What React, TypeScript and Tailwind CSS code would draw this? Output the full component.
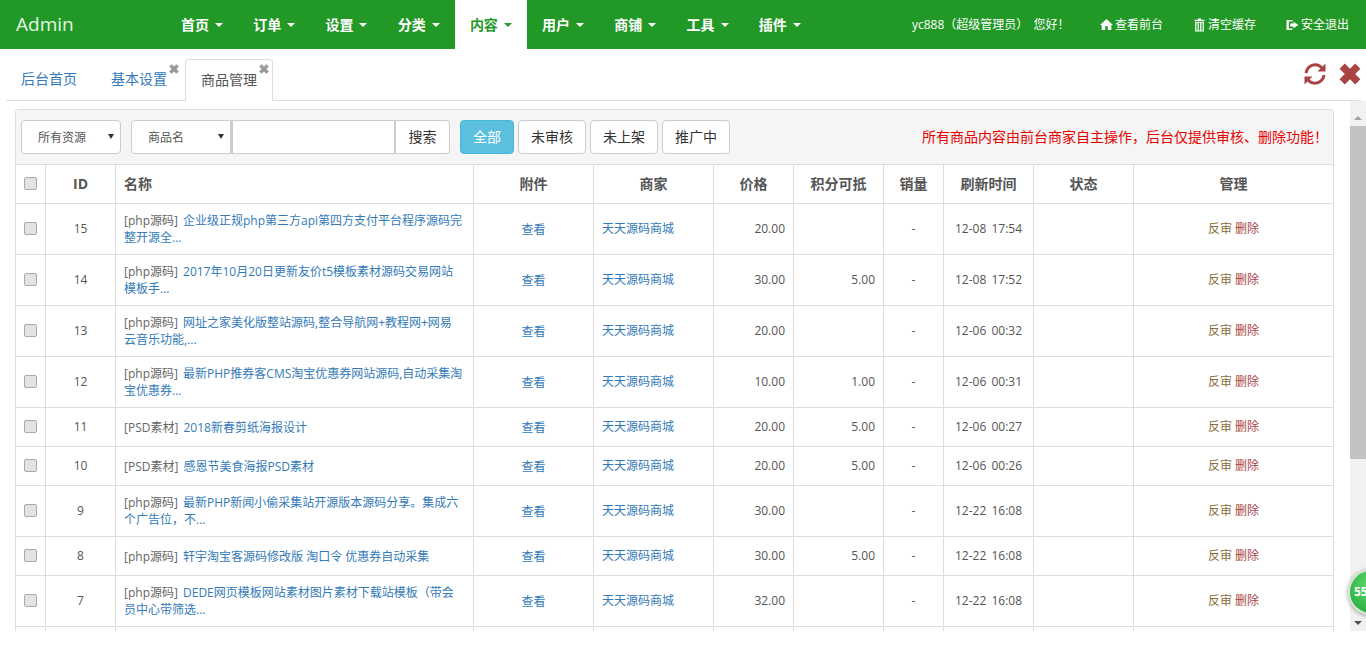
import React from "react";

const F = { fontFamily: '"Open Sans","Noto Sans CJK SC",sans-serif' };

const navItems = ["首页", "订单", "设置", "分类", "内容", "用户", "商铺", "工具", "插件"];

type Row = { id: number; tag: string; title: string; price: string; pts: string; time: string; tall: boolean };
const rows: Row[] = [
  { id: 15, tag: "[php源码]", title: "企业级正规php第三方api第四方支付平台程序源码完\n整开源全...", price: "20.00", pts: "", time: "12-08 17:54", tall: true },
  { id: 14, tag: "[php源码]", title: "2017年10月20日更新友价t5模板素材源码交易网站\n模板手...", price: "30.00", pts: "5.00", time: "12-08 17:52", tall: true },
  { id: 13, tag: "[php源码]", title: "网址之家美化版整站源码,整合导航网+教程网+网易\n云音乐功能,...", price: "20.00", pts: "", time: "12-06 00:32", tall: true },
  { id: 12, tag: "[php源码]", title: "最新PHP推券客CMS淘宝优惠券网站源码,自动采集淘\n宝优惠券...", price: "10.00", pts: "1.00", time: "12-06 00:31", tall: true },
  { id: 11, tag: "[PSD素材]", title: "2018新春剪纸海报设计", price: "20.00", pts: "5.00", time: "12-06 00:27", tall: false },
  { id: 10, tag: "[PSD素材]", title: "感恩节美食海报PSD素材", price: "20.00", pts: "5.00", time: "12-06 00:26", tall: false },
  { id: 9, tag: "[php源码]", title: "最新PHP新闻小偷采集站开源版本源码分享。集成六\n个广告位，不...", price: "30.00", pts: "", time: "12-22 16:08", tall: true },
  { id: 8, tag: "[php源码]", title: "轩宇淘宝客源码修改版 淘口令 优惠券自动采集", price: "30.00", pts: "5.00", time: "12-22 16:08", tall: false },
  { id: 7, tag: "[php源码]", title: "DEDE网页模板网站素材图片素材下载站模板（带会\n员中心带筛选...", price: "32.00", pts: "", time: "12-22 16:08", tall: true },
];

const Caret = ({ className }: { className: string }) => (
  <span className={"inline-block w-0 h-0 border-x-[4px] border-x-transparent border-t-[4px] ml-[6px] align-middle " + className} />
);

const Check = () => (
  <input type="checkbox" className="appearance-none block mx-auto w-[13px] h-[13px] rounded-[2px] border border-[#a9a9a9] bg-[#e3e3e3]" />
);

const SelectBox = ({ label, className }: { label: string; className: string }) => (
  <div className="relative">
    <select className={"appearance-none block w-[100px] h-[34px] bg-white border border-[#ccc] text-[12px] text-[#555] pl-[16px] pt-[2px] " + className}>
      <option>{label}</option>
    </select>
    <svg viewBox="0 0 6 5" className="absolute right-[7px] top-[14px] w-[6px] h-[5px] pointer-events-none">
      <path d="M0 0 H6 L3 5 Z" fill="#333" />
    </svg>
  </div>
);

const HomeIcon = () => (
  <svg viewBox="0 0 14 14" className="w-[13px] h-[13px] mr-[2px]" fill="#fff">
    <path d="M7 1 L14 7.6 L12.2 7.6 L12.2 13 L8.4 13 L8.4 9 L5.6 9 L5.6 13 L1.8 13 L1.8 7.6 L0 7.6 Z" />
  </svg>
);
const TrashIcon = () => (
  <svg viewBox="0 0 12 15" className="w-[11px] h-[14px] mr-[3px]" fill="#fff">
    <path d="M4.3 0.5 H7.7 V1.8 H11.5 V3 H0.5 V1.8 H4.3 Z" />
    <path d="M1.2 4 H10.8 V14.5 H1.2 Z M2.6 5 V13.4 H3.9 V5 Z M5.3 5 V13.4 H6.7 V5 Z M8.1 5 V13.4 H9.4 V5 Z" fillRule="evenodd" />
  </svg>
);
const LogoutIcon = () => (
  <svg viewBox="0 0 14 13" className="w-[13px] h-[12px] mr-[2px]" fill="#fff">
    <path d="M1.5 1 H7 V2.8 H3 V10.2 H7 V12 H1.5 C0.8 12 0.5 11.6 0.5 11 V2 C0.5 1.4 0.8 1 1.5 1 Z" />
    <path d="M8 3 L13.5 6.5 L8 10 V8 H4.5 V5 H8 Z" />
  </svg>
);
const RefreshIcon = () => (
  <svg viewBox="0 0 24 24" className="w-[24px] h-[24px]" fill="none" stroke="#a94442" strokeWidth="3">
    <path d="M3 11 C3.5 6 7.5 2.8 12 2.8 C15.3 2.8 18 4.4 19.6 7" />
    <path d="M21 13 C20.5 18 16.5 21.2 12 21.2 C8.7 21.2 6 19.6 4.4 17" />
    <path d="M22.5 1.5 V9.5 H14.5 Z" fill="#a94442" stroke="none" />
    <path d="M1.5 22.5 V14.5 H9.5 Z" fill="#a94442" stroke="none" />
  </svg>
);
const CloseIcon = ({ size, color }: { size: string; color: string }) => (
  <svg viewBox="0 0 20 20" className={size}>
    <path d="M2 6 L6 2 L10 6 L14 2 L18 6 L14 10 L18 14 L14 18 L10 14 L6 18 L2 14 L6 10 Z" fill={color} />
  </svg>
);

const th = "border border-[#ddd] font-bold text-[14px] text-[#555] text-center p-0 pb-[2px]";
const td = "border border-[#ddd] p-0 text-[12px] leading-[17px] align-middle";
const tdUp = td + " pb-[2px]";

export default function App() {
  return (
    <div style={F} className="w-[1366px] h-[660px] overflow-hidden bg-white relative">
      <nav className="h-[49px] bg-[#229926] flex items-stretch">
        <div className="w-[166px] pl-[16px] text-[19px] text-[#e6f5e6] flex items-center">Admin</div>
        <div className="flex w-[650px]">
          {navItems.map((n, i) => (
            <div
              key={n}
              className={
                "w-[72.25px] pl-[15px] flex items-center text-[14px] font-bold " +
                (i === 4 ? "bg-white text-[#229926]" : "text-white")
              }
            >
              {n}
              <Caret className={i === 4 ? "border-t-[#229926]" : "border-t-white"} />
            </div>
          ))}
        </div>
        <div className="flex-1 flex items-center text-[12px] text-white pl-[96px]">
          <span className="w-[188px] whitespace-nowrap [word-spacing:2px]">yc888（超级管理员） 您好！</span>
          <span className="flex items-center w-[94px]"><HomeIcon />查看前台</span>
          <span className="flex items-center w-[92px]"><TrashIcon />清空缓存</span>
          <span className="flex items-center whitespace-nowrap"><LogoutIcon />安全退出</span>
        </div>
      </nav>

      <div className="h-[52px] flex relative">
        <div className="flex-1 ml-[6px] mr-[5px] h-[52px] border-b border-[#ddd] flex items-end text-[14px]">
          <div className="w-[89px] h-[41px] pl-[15px] pb-[2px] flex items-center text-[#337ab7]">后台首页</div>
          <div className="w-[90px] h-[41px] pl-[16px] pb-[2px] flex items-center text-[#337ab7] relative">
            基本设置
            <span className="absolute left-[73px] top-[4px]"><CloseIcon size="w-[12px] h-[12px]" color="#999" /></span>
          </div>
          <div className="w-[88px] h-[42px] -mb-px pl-[15px] pb-[2px] flex items-center text-[#555] bg-white border border-[#ddd] border-b-white rounded-t-[4px] relative">
            商品管理
            <span className="absolute left-[72px] top-[3px]"><CloseIcon size="w-[12px] h-[12px]" color="#999" /></span>
          </div>
        </div>
        <div className="absolute right-[3px] top-[12px] flex items-center gap-[10px]">
          <RefreshIcon />
          <CloseIcon size="w-[26px] h-[26px]" color="#a94442" />
        </div>
      </div>

      <div className="h-[530px] flex">
        <div className="w-[1350px] h-[530px] overflow-hidden pt-[8px] pl-[15px] pr-[16px]">
          <div className="border border-[#ddd] rounded-t-[4px] border-b-0">
            <div className="h-[54px] bg-[#f5f5f5] flex items-center pl-[5px] pr-[5px] text-[14px] text-[#333]">
              <SelectBox label="所有资源" className="rounded-[4px]" />
              <div className="ml-[10px]">
                <SelectBox label="商品名" className="rounded-l-[4px]" />
              </div>
              <input className="w-[165px] h-[34px] bg-white border border-[#ccc] border-x-2" />
              <button className="w-[54px] h-[34px] pb-[2px] bg-white border border-[#ccc] border-l-0 rounded-r-[4px]">搜索</button>
              <button className="w-[54px] h-[34px] pb-[2px] ml-[10px] bg-[#5bc0de] border border-[#46b8da] rounded-[4px] text-white">全部</button>
              <button className="w-[68px] h-[34px] pb-[2px] ml-[4px] bg-white border border-[#ccc] rounded-[4px]">未审核</button>
              <button className="w-[68px] h-[34px] pb-[2px] ml-[4px] bg-white border border-[#ccc] rounded-[4px]">未上架</button>
              <button className="w-[68px] h-[34px] pb-[2px] ml-[4px] bg-white border border-[#ccc] rounded-[4px]">推广中</button>
              <span className="ml-auto pb-[2px] text-[14px] text-[#e60000] whitespace-nowrap">所有商品内容由前台商家自主操作，后台仅提供审核、删除功能！</span>
            </div>
            <table className="table-fixed border-collapse w-[1319px] -ml-px">
              <colgroup>
                {[30, 70, 358, 120, 120, 80, 90, 60, 90, 100, 200].map((w, i) => (
                  <col key={i} style={{ width: w }} />
                ))}
              </colgroup>
              <thead>
                <tr className="h-[39px]">
                  <th className={th}><Check /></th>
                  <th className={th}>ID</th>
                  <th className={th + " !text-left pl-[8px]"}>名称</th>
                  <th className={th}>附件</th>
                  <th className={th}>商家</th>
                  <th className={th}>价格</th>
                  <th className={th}>积分可抵</th>
                  <th className={th}>销量</th>
                  <th className={th}>刷新时间</th>
                  <th className={th}>状态</th>
                  <th className={th}>管理</th>
                </tr>
              </thead>
              <tbody>
                {rows.map((r) => (
                  <tr key={r.id} className={r.tall ? "h-[51px]" : "h-[39px]"}>
                    <td className={tdUp}><Check /></td>
                    <td className={tdUp + " text-center text-[#555]"}>{r.id}</td>
                    <td className={td + " px-[8px] text-[#666] whitespace-pre-line [word-spacing:2px]"}>
                      {r.tag} <span className="text-[#337ab7] [word-spacing:0]">{r.title}</span>
                    </td>
                    <td className={td + " text-center text-[#337ab7]"}>查看</td>
                    <td className={tdUp + " pl-[8px] text-[#337ab7]"}>天天源码商城</td>
                    <td className={tdUp + " text-right pr-[8px] text-[#555]"}>{r.price}</td>
                    <td className={tdUp + " text-right pr-[8px] text-[#555]"}>{r.pts}</td>
                    <td className={tdUp + " text-center text-[#555]"}>-</td>
                    <td className={tdUp + " text-center text-[#555] [word-spacing:2px]"}>{r.time}</td>
                    <td className={td}></td>
                    <td className={tdUp + " text-center"}>
                      <span className="text-[#8a6d3b]">反审</span> <span className="text-[#a94442]">删除</span>
                    </td>
                  </tr>
                ))}
                <tr className="h-[39px]">
                  {Array.from({ length: 11 }).map((_, i) => (
                    <td key={i} className={td}></td>
                  ))}
                </tr>
              </tbody>
            </table>
          </div>
        </div>
        <div className="w-[16px] h-[530px] bg-[#f1f1f1] flex flex-col items-center pt-[8px]">
          <div className="h-[17px] flex items-center">
            <span className="w-0 h-0 border-x-[4px] border-x-transparent border-b-[4px] border-b-[#a3a3a3]" />
          </div>
          <div className="w-full h-[333px] bg-[#c1c1c1]" />
          <div className="mt-auto h-[17px] flex items-center">
            <span className="w-0 h-0 border-x-[4px] border-x-transparent border-t-[4px] border-t-[#505050]" />
          </div>
        </div>
      </div>

      <div
        className="absolute left-[1348px] top-[569px] w-[46px] h-[46px] rounded-full border-2 border-[#cfe8cf] flex items-center pl-[4px] text-[12px] font-bold text-white shadow-[0_1px_4px_rgba(0,0,0,0.4)] bg-[radial-gradient(circle_at_50%_35%,#5fdc6e,#22a23a)]"
      >
        55
      </div>
    </div>
  );
}
